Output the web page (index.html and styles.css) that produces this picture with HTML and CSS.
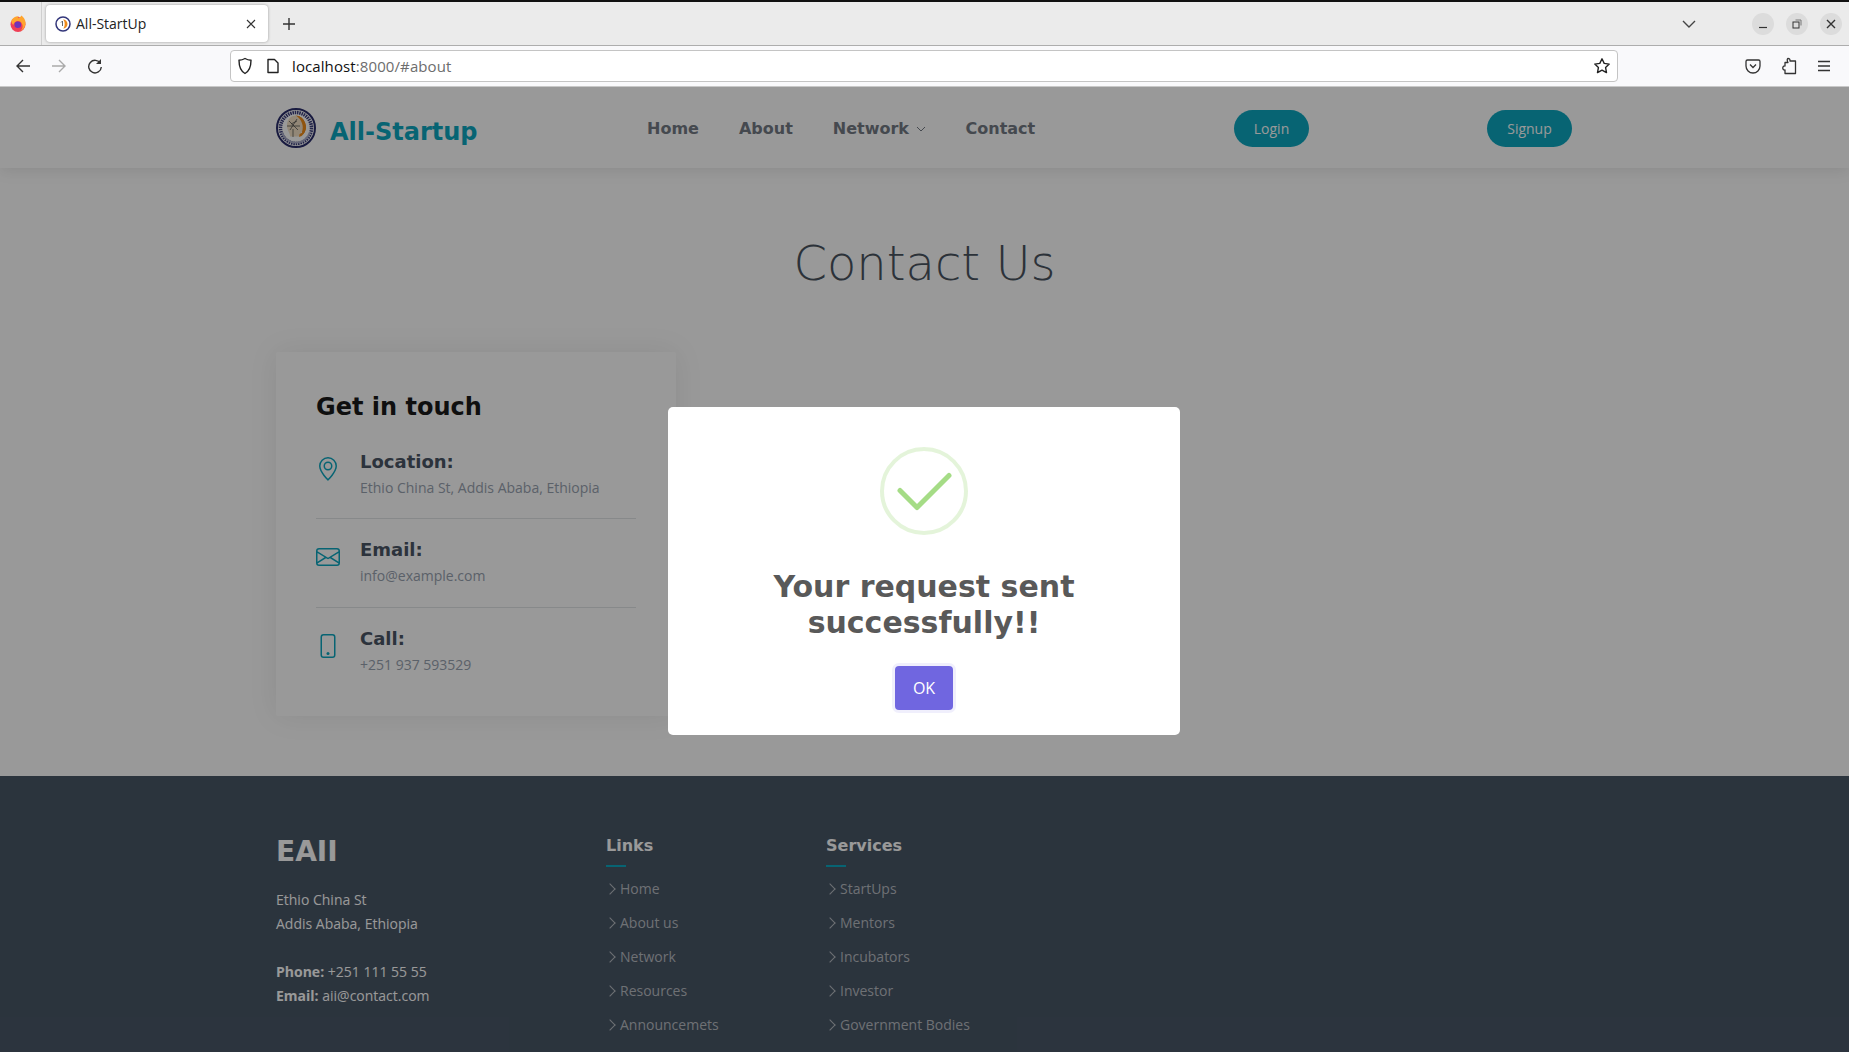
FILE: index.html
```html
<!DOCTYPE html>
<html lang="en">
<head>
    <meta charset="UTF-8">
    <meta name="viewport" content="width=device-width, initial-scale=1.0">
    <title>All-StartUp</title>
    <link rel="stylesheet" href="styles.css">
</head>
<body>
    <div class="tabbar">
        <div class="ff-slot">
            <svg width="18" height="18" viewBox="0 0 18 18"><circle cx="9" cy="9.500" r="7.500" fill="#ef3f56"/><path d="M2.200 6C3.500 2.500 7 .8 10 1.200c-1 .6-1.200 1.400-1 2 2-.6 3-1.500 3.200-2.700 3 2 5 5.500 4.200 9-.5 3.200-2.500 5.500-5 6.200 2.400-2 3-5 1.400-7.300C11.500 6 9 5.500 7 6.500 5.500 7.300 4.500 8.500 4.300 10 3.300 9 2.500 7.600 2.200 6z" fill="#ffa52e"/><circle cx="8.800" cy="9.800" r="3.300" fill="#6f34b8"/></svg>
        </div>
        <div class="tab">
            <svg class="favicon" width="16" height="16" viewBox="0 0 16 16"><circle cx="8" cy="8" r="7" fill="#fff" stroke="#33367a" stroke-width="1.500"/><path d="M8 3.500a4.500 4.500 0 0 1 0 9c2-1 2.500-7 0-9z" fill="#ef8a17"/><path d="M6 6.500l1.500-1.500v5" fill="none" stroke="#666" stroke-width="1"/></svg>
            <span class="tab-title">All-StartUp</span>
            <svg class="tab-close" width="10" height="10" viewBox="0 0 10 10"><path d="M1 1l8 8M9 1l-8 8" stroke="#333" stroke-width="1.100"/></svg>
        </div>
        <svg class="new-tab" width="14" height="14" viewBox="0 0 14 14"><path d="M7 1v12M1 7h12" stroke="#333" stroke-width="1.400"/></svg>
        <svg class="tab-list" width="14" height="8" viewBox="0 0 14 8"><path d="M1 1l6 6 6-6" fill="none" stroke="#444" stroke-width="1.400"/></svg>
        <div class="win-buttons">
            <span class="win-btn"><svg width="10" height="10" viewBox="0 0 10 10"><path d="M1 8.500h8" stroke="#333" stroke-width="1.200"/></svg></span>
            <span class="win-btn"><svg width="10" height="10" viewBox="0 0 10 10"><rect x="1" y="3" width="6" height="6" fill="none" stroke="#333"/><path d="M3.500 1h5.500v5.500" fill="none" stroke="#777"/></svg></span>
            <span class="win-btn"><svg width="10" height="10" viewBox="0 0 10 10"><path d="M1 1l8 8M9 1l-8 8" stroke="#333" stroke-width="1.400"/></svg></span>
        </div>
    </div>

    <div class="toolbar">
        <div class="nav-buttons">
            <svg width="16" height="16" viewBox="0 0 16 16"><path d="M15 8H2M8 2L2 8l6 6" fill="none" stroke="#333" stroke-width="1.400"/></svg>
            <svg width="16" height="16" viewBox="0 0 16 16"><path d="M1 8h13M8 2l6 6-6 6" fill="none" stroke="#aaa" stroke-width="1.400"/></svg>
            <svg width="16" height="16" viewBox="0 0 16 16"><path d="M13.500 5.500A6.300 6.300 0 1 0 14.300 9" fill="none" stroke="#333" stroke-width="1.400"/><path d="M14 1v5H9z" fill="#333"/></svg>
        </div>
        <div class="urlbar">
            <svg width="16" height="18" viewBox="0 0 16 18"><path d="M8 1.500c2 1.200 4 1.700 6 1.800 0 6-1 10.500-6 13.200C3 13.800 2 9.300 2 3.300c2-.1 4-.6 6-1.800z" fill="none" stroke="#222" stroke-width="1.400"/></svg>
            <svg class="doc-icon" width="14" height="16" viewBox="0 0 14 16"><path d="M2 1.500h6.500l3.500 3.500v9.500H2z" fill="none" stroke="#222" stroke-width="1.400" stroke-linejoin="round"/></svg>
            <span class="url"><b>localhost</b>:8000/#about</span>
            <svg class="star" width="18" height="18" viewBox="0 0 18 18"><path d="M9 1.800l2.200 4.600 5 .7-3.600 3.500.9 5L9 13.200l-4.500 2.400.9-5L1.800 7.100l5-.7z" fill="none" stroke="#222" stroke-width="1.400" stroke-linejoin="round"/></svg>
        </div>
        <div class="tool-icons">
            <svg width="16" height="16" viewBox="0 0 16 16"><path d="M2.500 2h11A1.500 1.500 0 0 1 15 3.500V8A7 7 0 0 1 1 8V3.500A1.500 1.500 0 0 1 2.500 2z" fill="none" stroke="#333" stroke-width="1.300"/><path d="M5 6.500l3 3 3-3" fill="none" stroke="#333" stroke-width="1.300"/></svg>
            <svg width="16" height="18" viewBox="0 0 16 18"><path d="M7 1.500c1.500 0 2.200 1 2 2.500H14.500v12.500H4v-3.500c-3 .5-3-4.500 0-4V5.500h3c-1-1.500-1-4 0-4z" fill="none" stroke="#333" stroke-width="1.300" stroke-linejoin="round"/></svg>
            <svg width="14" height="12" viewBox="0 0 14 12"><path d="M1 1.500h12M1 6h12M1 10.500h12" stroke="#333" stroke-width="1.300"/></svg>
        </div>
    </div>

    <div class="page">
        <header class="site-header">
            <a class="logo" href="#">
                <svg width="40" height="40" viewBox="0 0 40 40">
                    <circle cx="20" cy="20" r="19" fill="#fff" stroke="#2a2d6b" stroke-width="2"/>
                    <circle cx="20" cy="20" r="15.500" fill="none" stroke="#3b3e7c" stroke-width="3.500" stroke-dasharray="1.500 .8"/>
                    <circle cx="20" cy="20" r="13" fill="#fff"/>
                    <path d="M5 24a15.500 15.500 0 0 0 30 0l-2 0a13.500 13.500 0 0 1-26 0z" fill="#a9acc8"/>
                    <path d="M20 7.500a11.500 11.500 0 0 1 7 19c-1 1.500-2.500 2-4 2.500l.5-3.500c2.500 0 3.500-1.500 3.500-3l1-1-1.500-3c.5-5-2-9.500-6.500-11z" fill="#f08c18"/>
                    <path d="M20 7.500c5 1 8 6 7 11l1 2.500-1.500 1c0 2-1.500 3.500-3.500 3.500v3H14c.5-3-3-6-3-11 0-6 4-10 9-10z" fill="#f3e2c6"/>
                    <path d="M13 13l9 9M21 11l-7 11M11 18h13M17 21v8M15 16l6-3" stroke="#444" stroke-width=".7" fill="none"/>
                    <path d="M20 7.500a11.500 11.500 0 0 1 7 19l-1-3c2-5 0-12-6-16z" fill="#f08c18"/>
                </svg>
                <span>All-Startup</span>
            </a>
            <nav class="main-nav">
                <a href="#">Home</a>
                <a href="#">About</a>
                <a href="#">Network <svg width="10" height="6" viewBox="0 0 10 6"><path d="M1 1l4 4 4-4" fill="none" stroke="currentColor" stroke-width="1"/></svg></a>
                <a href="#">Contact</a>
            </nav>
            <a class="pill login" href="#">Login</a>
            <a class="pill signup" href="#">Signup</a>
        </header>

        <section class="contact">
            <h2 class="section-title">Contact Us</h2>
            <div class="info-card">
                <h3>Get in touch</h3>
                <div class="info-row first">
                    <svg class="info-icon" viewBox="0 0 16 16" fill="currentColor"><path d="M12.166 8.94c-.524 1.062-1.234 2.12-1.96 3.07A31.493 31.493 0 0 1 8 14.58a31.481 31.481 0 0 1-2.206-2.57c-.726-.95-1.436-2.008-1.96-3.07C3.304 7.867 3 6.862 3 6a5 5 0 0 1 10 0c0 .862-.305 1.867-.834 2.94zM8 16s6-5.686 6-10A6 6 0 0 0 2 6c0 4.314 6 10 6 10z"/><path d="M8 8a2 2 0 1 1 0-4 2 2 0 0 1 0 4zm0 1a3 3 0 1 0 0-6 3 3 0 0 0 0 6z"/></svg>
                    <div>
                        <h4>Location:</h4>
                        <p>Ethio China St, Addis Ababa, Ethiopia</p>
                    </div>
                </div>
                <div class="info-row">
                    <svg class="info-icon" viewBox="0 0 16 16" fill="currentColor"><path d="M0 4a2 2 0 0 1 2-2h12a2 2 0 0 1 2 2v8a2 2 0 0 1-2 2H2a2 2 0 0 1-2-2V4Zm2-1a1 1 0 0 0-1 1v.217l7 4.2 7-4.2V4a1 1 0 0 0-1-1H2Zm13 2.383-4.708 2.825L15 11.105V5.383Zm-.034 6.876-5.64-3.471L8 9.583l-1.326-.795-5.64 3.47A1 1 0 0 0 2 13h12a1 1 0 0 0 .966-.741ZM1 11.105l4.708-2.897L1 5.383v5.722Z"/></svg>
                    <div>
                        <h4>Email:</h4>
                        <p>info@example.com</p>
                    </div>
                </div>
                <div class="info-row">
                    <svg class="info-icon" viewBox="0 0 16 16" fill="currentColor"><path d="M11 1a1 1 0 0 1 1 1v12a1 1 0 0 1-1 1H5a1 1 0 0 1-1-1V2a1 1 0 0 1 1-1h6zM5 0a2 2 0 0 0-2 2v12a2 2 0 0 0 2 2h6a2 2 0 0 0 2-2V2a2 2 0 0 0-2-2H5z"/><path d="M8 14a1 1 0 1 0 0-2 1 1 0 0 0 0 2z"/></svg>
                    <div>
                        <h4>Call:</h4>
                        <p>+251 937 593529</p>
                    </div>
                </div>
            </div>
        </section>

        <footer class="site-footer">
            <div class="footer-about">
                <h3>EAII</h3>
                <p>Ethio China St<br>Addis Ababa, Ethiopia</p>
                <p><strong>Phone:</strong> +251 111 55 55<br><strong>Email:</strong> aii@contact.com</p>
            </div>
            <div class="footer-links">
                <h4>Links</h4>
                <ul>
                    <li>Home</li>
                    <li>About us</li>
                    <li>Network</li>
                    <li>Resources</li>
                    <li>Announcemets</li>
                </ul>
            </div>
            <div class="footer-links">
                <h4>Services</h4>
                <ul>
                    <li>StartUps</li>
                    <li>Mentors</li>
                    <li>Incubators</li>
                    <li>Investor</li>
                    <li>Government Bodies</li>
                </ul>
            </div>
        </footer>

        <div class="overlay">
            <div class="modal">
                <svg class="check" width="88" height="88" viewBox="0 0 88 88">
                    <circle cx="44" cy="44" r="42" fill="none" stroke="#a5dc86" stroke-opacity=".3" stroke-width="4"/>
                    <path d="M20 43.500l17 17 32-32" fill="none" stroke="#a5dc86" stroke-width="5" stroke-linecap="round" stroke-linejoin="round"/>
                </svg>
                <h2>Your request sent successfully!!</h2>
                <button class="ok-btn">OK</button>
            </div>
        </div>
    </div>
</body>
</html>
```

FILE: styles.css
```css
* {
    box-sizing: border-box;
}
html, body {
    height: 100%;
}
body {
    margin: 0;
    overflow: hidden;
    font-family: "Open Sans", sans-serif;
    background: #fff;
    display: flex;
    flex-direction: column;
}

/* browser chrome */
.tabbar {
    height: 46px;
    flex: none;
    display: flex;
    align-items: center;
    background: #ebebeb;
    border-top: 2px solid #111;
    border-bottom: 1px solid #adadad;
    padding-right: 7px;
}
.ff-slot {
    width: 42px;
    height: 43px;
    flex: none;
    display: flex;
    align-items: center;
    justify-content: center;
    padding-right: 5px;
    border-right: 1px solid #cfcfcf;
}
.tab {
    width: 222px;
    height: 37px;
    margin-left: 4px;
    padding: 0 12px 0 9px;
    display: flex;
    align-items: center;
    background: #fff;
    border-radius: 4px;
    box-shadow: 0 0 3px rgba(0, 0, 0, .35);
}
.tab-title {
    margin-left: 5px;
    font-size: 14px;
    color: #222;
    flex: 1;
}
.new-tab {
    margin-left: 14px;
}
.tab-list {
    margin-left: auto;
    margin-right: 56px;
}
.win-buttons {
    display: flex;
    gap: 12px;
}
.win-btn {
    width: 22px;
    height: 22px;
    border-radius: 50%;
    background: #dcdcdc;
    display: flex;
    align-items: center;
    justify-content: center;
}
.toolbar {
    height: 41px;
    flex: none;
    display: flex;
    align-items: center;
    background: #f9f9fb;
    border-bottom: 1px solid #c8c8c8;
}
.nav-buttons {
    width: 230px;
    padding-left: 15px;
    display: flex;
    gap: 20px;
}
.urlbar {
    width: 1388px;
    height: 32px;
    display: flex;
    align-items: center;
    padding: 0 6px;
    background: #fff;
    border: 1px solid #c4c4c4;
    border-radius: 4px;
}
.doc-icon {
    margin-left: 13px;
}
.url {
    margin-left: 12px;
    font-size: 15px;
    color: #6d6d6d;
    letter-spacing: .1px;
}
.url b {
    font-weight: 400;
    color: #111;
}
.star {
    margin-left: auto;
}
.tool-icons {
    flex: 1;
    display: flex;
    align-items: center;
    padding-left: 127px;
    gap: 20px;
}

/* page */
.page {
    position: relative;
    flex: 1;
    min-height: 0;
    overflow: hidden;
    display: flex;
    flex-direction: column;
}
.site-header {
    height: 81px;
    flex: none;
    display: flex;
    align-items: center;
    padding: 0 277px 0 276px;
    box-shadow: 0 2px 15px rgba(0, 0, 0, .1);
    font-family: "DejaVu Sans", sans-serif;
}
.logo {
    display: flex;
    align-items: center;
    gap: 14px;
    width: 371px;
    font-size: 24px;
    font-weight: 700;
    color: #0da7c0;
    text-decoration: none;
}
.logo span {
    padding-top: 9px;
}
.main-nav {
    display: flex;
    gap: 40px;
    width: 587px;
    margin-top: 1px;
}
.main-nav a {
    font-size: 16px;
    font-weight: 700;
    color: #737a84;
    text-decoration: none;
}
.main-nav svg {
    margin-left: 1px;
    vertical-align: 2px;
}
.pill {
    height: 37px;
    margin-top: 1px;
    display: flex;
    align-items: center;
    justify-content: center;
    border-radius: 50px;
    background: #0da7c0;
    color: #fff;
    font-family: "Open Sans", sans-serif;
    font-size: 14px;
    text-decoration: none;
}
.login {
    width: 75px;
}
.signup {
    width: 85px;
    margin-left: auto;
}
.contact {
    flex: none;
    height: 608px;
    padding: 67px 276px 0;
}
.section-title {
    margin: 0;
    font-family: "DejaVu Sans", sans-serif;
    font-weight: 200;
    font-size: 48px;
    line-height: 56px;
    text-align: center;
    color: #4a5460;
}
.info-card {
    width: 400px;
    height: 364px;
    margin-top: 61px;
    padding: 41px 40px 40px;
    box-shadow: 0 0 30px rgba(0, 0, 0, .08);
    border-radius: 2px;
}
.info-card h3 {
    margin: 0 0 29px;
    font-family: "DejaVu Sans", sans-serif;
    font-size: 24px;
    line-height: 29px;
    color: #1a1a1a;
}
.info-row {
    display: flex;
    gap: 20px;
    height: 89px;
    padding-top: 20px;
    border-top: 1px solid #e2e4e6;
    color: #0da7c0;
}
.info-row.first {
    height: 67px;
    padding-top: 0;
    border-top: 0;
}
.info-icon {
    width: 24px;
    height: 24px;
    flex: none;
    margin-top: 6px;
}
.info-row h4 {
    margin: 0;
    font-family: "DejaVu Sans", sans-serif;
    font-size: 18px;
    line-height: 22px;
    color: #4a5565;
}
.info-row p {
    margin: 5px 0 0;
    font-size: 14px;
    line-height: 19px;
    color: #98a2af;
}

/* footer */
.site-footer {
    flex: 1;
    display: flex;
    padding: 59px 0 0 276px;
    background: #495767;
    color: #fff;
    font-size: 14px;
    line-height: 24px;
}
.footer-about {
    width: 330px;
}
.footer-about h3 {
    margin: 0 0 19px;
    font-family: "DejaVu Sans", sans-serif;
    font-size: 28px;
    line-height: 34px;
}
.footer-about p {
    margin: 0 0 24px;
}
.footer-links {
    width: 220px;
}
.footer-links h4 {
    position: relative;
    margin: 1px 0 0;
    padding-bottom: 12px;
    font-family: "DejaVu Sans", sans-serif;
    font-size: 16px;
    line-height: 19px;
}
.footer-links h4::after {
    content: "";
    position: absolute;
    left: 0;
    bottom: 0;
    width: 20px;
    height: 2px;
    background: #0da7c0;
}
.footer-links ul {
    list-style: none;
    margin: 5px 0 0;
    padding: 0;
}
.footer-links li {
    height: 34px;
    display: flex;
    align-items: center;
    padding-left: 14px;
    position: relative;
    color: #b8bcc2;
}
.footer-links li::before {
    content: "";
    position: absolute;
    left: 0;
    top: 13px;
    width: 7px;
    height: 7px;
    border-top: 1px solid #b8bcc2;
    border-right: 1px solid #b8bcc2;
    transform: rotate(45deg);
}

/* alert */
.overlay {
    position: absolute;
    inset: 0;
    background: rgba(0, 0, 0, .4);
    display: flex;
    justify-content: center;
    padding: 320px 1px 0 0;
}
.modal {
    width: 512px;
    height: 328px;
    padding-top: 40px;
    background: #fff;
    border-radius: 5px;
    display: flex;
    flex-direction: column;
    align-items: center;
}
.modal h2 {
    margin: 34px 0 0;
    width: 400px;
    text-align: center;
    font-family: "DejaVu Sans", sans-serif;
    font-size: 30px;
    line-height: 36px;
    font-weight: 700;
    color: #595959;
}
.ok-btn {
    width: 58px;
    height: 44px;
    margin-top: 25px;
    border: 0;
    border-radius: 4px;
    background: #7066e0;
    color: #fff;
    font-family: "Open Sans", sans-serif;
    font-size: 16px;
    box-shadow: 0 0 0 3px rgba(112, 102, 224, .1);
}
```
